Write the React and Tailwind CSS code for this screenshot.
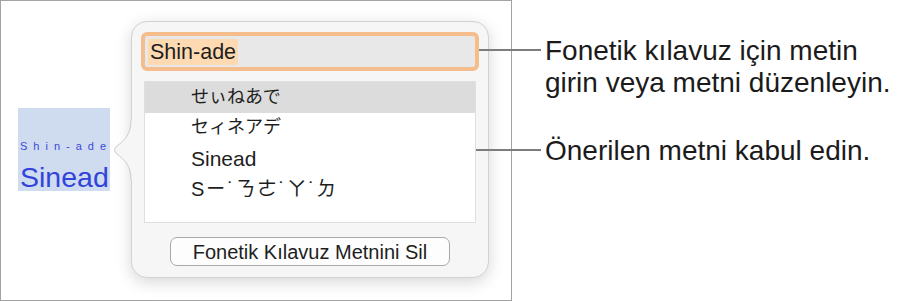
const rows = [
  { text: 'せぃねあで', size: 'text-[18px]', active: true },
  { text: 'セィネアデ', size: 'text-[18px]' },
  { text: 'Sinead', size: 'text-[21px]' },
  { text: 'Sㄧ˙ㄋㄜ˙ㄚ˙ㄉ', size: 'text-[20px] tracking-[1.5px]' },
];

function PopoverArrow() {
  return (
    <svg className="absolute left-[-21px] top-[98px]" width="24" height="60" viewBox="0 0 24 60">
      <path d="M20 0 C20 14 14 20 6 26 Q1 30 6 34 C14 40 20 46 20 60 L24 60 L24 0 Z" fill="#f6f6f6" />
      <path d="M20 0 C20 14 14 20 6 26 Q1 30 6 34 C14 40 20 46 20 60" fill="none" stroke="#cdcdcd" strokeWidth="1" />
    </svg>
  );
}

function Callout({ children, lineWidth, pull }) {
  return (
    <div className="flex items-start">
      <div className={`relative mt-[14px] h-[2px] bg-[#7d7d7d] ${lineWidth} ${pull}`} />
      <p className="ml-[4px] whitespace-nowrap text-[28px] leading-[32px] text-[#1b1b1b]">{children}</p>
    </div>
  );
}

export default function App() {
  return (
    <div
      className="flex w-[910px] h-[301px] bg-white overflow-hidden"
      style={{ fontFamily: '"Liberation Sans", "Noto Sans CJK JP", "Noto Sans CJK TC", sans-serif' }}
    >
      {/* screenshot frame */}
      <div className="flex items-start shrink-0 w-[512px] h-[301px] border border-[#a3a3a3]">
        <div className="flex flex-col shrink-0 ml-[17px] mt-[107px] w-[92px] h-[83px] pl-[2px] pt-[32px] bg-[#cfdbee] whitespace-nowrap">
          <span className="text-[11px] leading-[13px] tracking-[6px] text-[#3a4ad8]">Shin-ade</span>
          <span className="mt-[9px] text-[28.5px] leading-[30px] text-[#3243dc]">Sinead</span>
        </div>

        <div className="relative shrink-0 ml-[21px] mt-[20px] w-[358px] h-[257px] px-[9px] pt-[10px] rounded-[16px] border border-[#d2d2d2] bg-[#f6f6f6] shadow-[0_4px_16px_rgba(0,0,0,0.16)]">
          <PopoverArrow />

          <div className="flex items-center h-[39px] rounded-[6px] border-[4px] border-[#f6bd8c] bg-[#e8e8e8]">
            <span className="ml-[3px] px-[2px] text-[21.5px] leading-[26px] text-[#1e1e1e] bg-[#fedab2]">Shin-ade</span>
          </div>

          <div className="mx-[3px] mt-[10px] h-[142px] border border-[#dfdfdf] bg-white">
            {rows.map((r) => (
              <div
                key={r.text}
                className={`flex items-center h-[30.5px] pl-[46px] ${r.size} text-[#1e1e1e] ${r.active ? 'bg-[#dcdcdc]' : ''}`}
              >
                {r.text}
              </div>
            ))}
          </div>

          <button className="flex items-center justify-center mx-auto mt-[14px] w-[280px] h-[29px] rounded-[7px] border border-[#a9a9a9] bg-[#fdfdfd] text-[20px] text-[#1e1e1e]">
            Fonetik Kılavuz Metnini Sil
          </button>
        </div>
      </div>

      {/* callouts */}
      <div className="flex flex-col pt-[35px]">
        <Callout lineWidth="w-[62px]" pull="-ml-[33px]">
          Fonetik kılavuz için metin
          <br />
          girin veya metni düzenleyin.
        </Callout>
        <div className="mt-[36px]">
          <Callout lineWidth="w-[65px]" pull="-ml-[36px]">
            Önerilen metni kabul edin.
          </Callout>
        </div>
      </div>
    </div>
  );
}
